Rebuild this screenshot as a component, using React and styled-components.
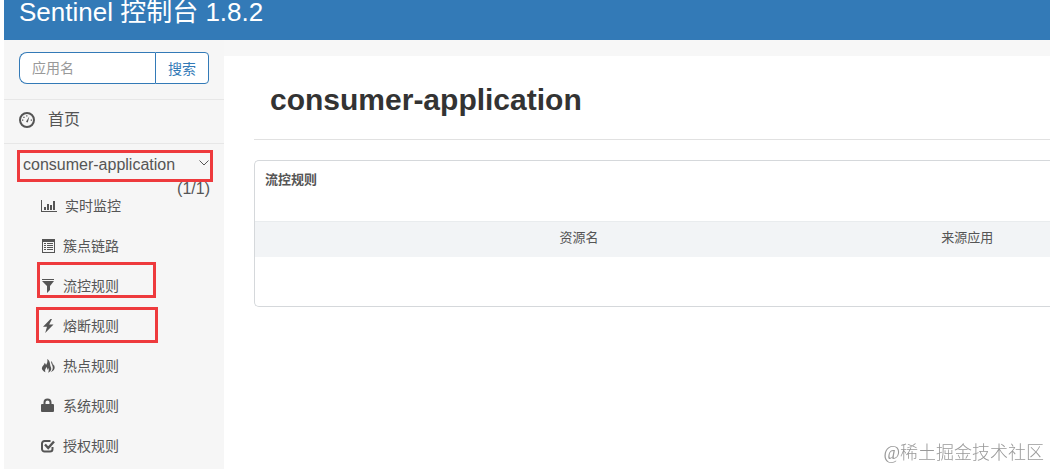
import React from "react";
import styled, { createGlobalStyle } from "styled-components";

const GlobalStyle = createGlobalStyle`
  * { box-sizing: border-box; }
  body {
    margin: 0;
    background: #fff;
    color: #555;
    font-family: "Liberation Sans", Arial, "Noto Sans CJK SC", sans-serif;
    font-size: 14px;
  }
`;

const Page = styled.div`
  min-height: 100vh;
  padding-left: 4px;
  display: flex;
  flex-direction: column;
`;

const Header = styled.header`
  height: 40px;
  padding-left: 15px;
  background: #337ab7;
`;

const Brand = styled.a`
  display: block;
  color: #fff;
  font-size: 26px;
  line-height: 24px;
  text-decoration: none;
  white-space: nowrap;
`;

const Body = styled.div`
  flex: 1;
  display: flex;
  background: #f7f7f7;
`;

const Sidebar = styled.nav`
  flex: none;
  width: 220px;
  background: #f6f6f6;
`;

const Search = styled.form`
  display: flex;
  height: 59px;
  padding: 12px 15px 15px;
`;

const SearchInput = styled.input`
  flex: 1;
  min-width: 0;
  padding: 0 12px;
  border: 1px solid #337ab7;
  border-right: 0;
  border-radius: 8px 0 0 8px;
  background: #fff;
  font: inherit;
  outline: 0;
  &::placeholder { color: #999; opacity: 1; }
`;

const SearchButton = styled.button`
  width: 54px;
  padding: 0;
  border: 1px solid #337ab7;
  border-radius: 0 4px 4px 0;
  background: #fff;
  color: #337ab7;
  font: inherit;
`;

const HomeLink = styled.a`
  display: flex;
  align-items: center;
  gap: 13px;
  height: 44px;
  padding: 0 15px 4px;
  border-top: 1px solid #e7e7e7;
  color: #555;
  font-size: 16px;
  line-height: 24px;
  text-decoration: none;
`;

const AppGroup = styled.section`
  border-top: 1px solid #e7e7e7;
`;

const AppLink = styled.a`
  position: relative;
  display: flex;
  flex-wrap: wrap;
  justify-content: space-between;
  padding: 9px 14px 0 19px;
  color: #555;
  font-size: 16px;
  line-height: 24px;
  text-decoration: none;
`;

const Count = styled.span`
  width: 100%;
  height: 10px;
  text-align: right;
`;

const Highlight = styled.span`
  position: absolute;
  top: ${(p) => p.$top}px;
  left: ${(p) => p.$left}px;
  width: ${(p) => p.$width}px;
  height: ${(p) => p.$height}px;
  border: 3px solid #ee3a3d;
`;

const Menu = styled.ul`
  margin: 0;
  padding: 0;
  list-style: none;
`;

const MenuItem = styled.li`
  position: relative;
`;

const MenuLink = styled.a`
  display: flex;
  align-items: center;
  gap: ${(p) => (p.$wide ? 8 : 6)}px;
  height: 40px;
  padding: 0 0 2px 37px;
  color: #555;
  line-height: 20px;
  text-decoration: none;
`;

const Icon = styled.svg`
  flex: none;
  width: 16px;
  height: 16px;
  fill: currentColor;
`;

const Chevron = styled.svg`
  width: 11px;
  height: 24px;
  fill: none;
  stroke: currentColor;
`;

const Main = styled.main`
  flex: 1;
  min-width: 0;
  margin-top: 16px;
  padding-left: 30px;
  background: #fff;
`;

const Title = styled.h1`
  height: 84px;
  margin: 0 0 20px;
  padding: 26px 16px 0;
  border-bottom: 1px solid #e1e1e1;
  color: #333;
  font-size: 30px;
  line-height: 36px;
`;

const Card = styled.section`
  height: 147px;
  overflow: hidden;
  border: 1px solid #d5d8db;
  border-right: 0;
  border-radius: 5px 0 0 5px;
`;

const CardTitle = styled.h2`
  height: 60px;
  margin: 0;
  padding: 10px;
  font-size: 13px;
  line-height: 18px;
`;

const Table = styled.table`
  width: 114%;
  table-layout: fixed;
  border-collapse: collapse;
`;

const Cell = styled.th`
  width: ${(p) => p.$width};
  height: 35px;
  padding: 0 0 5px;
  border-top: 1px solid #e9ecee;
  background: #f2f4f6;
  font-size: 13px;
  font-weight: 400;
`;

const Watermark = styled.div`
  position: fixed;
  right: 6px;
  bottom: 3px;
  color: #999;
  font-family: "Liberation Serif", "Noto Sans CJK SC", serif;
  font-size: 18px;
  font-weight: 300;
  line-height: 26px;
`;

const icons = {
  chart: <path d="M0 2h1v11h15v1H0zM3 9h2v3H3zM6 6h2v6H6zM9 7h2v5H9zM12 3h2v9h-2z" />,
  list: (
    <path fillRule="evenodd" d="M1 1h13v14H1zM2 4v10h11V4zM3 5h2v1H3zM6 5h6v1H6zM3 7h2v1H3zM6 7h6v1H6zM3 9h2v1H3zM6 9h6v1H6zM3 11h2v1H3zM6 11h6v1H6z" />
  ),
  filter: <path d="M1 1h12v1H1zM1 3h12L9 8v4l-3 3V8z" />,
  flash: <path d="M9.5 1L2 8.8h4L4.2 15 12.5 6.6H8.2L11 1z" />,
  fire: (
    <path d="M6.200 1c.7 3.200-.4 4.500-1.200 6C4.700 6 4.400 5.300 3.600 4.800 4 7-1.100 8.800 1.700 12.300c.7.9 1.700 1.600 2.800 2C3.300 11.800 5 10.600 5.500 9c1 1 .8 2 .6 2.900.8-.5 1-1.100 1.100-1.800.8 1.500.8 3-.2 4.600 3-1.300 4-3.600 2.600-6.300C8.700 6.500 9.600 3 6.200 1zM10 3c.2 2.100.4 2.700 1.100 4 1.400 2.900.5 5.500-1.700 7.300 4.500-1.600 5.100-4.800 3.300-7.800-.4 0-.4.6-.5 1.200C11.700 6 11.700 4.300 10 3z" />
  ),
  lock: <path fillRule="evenodd" d="M2.500 6V4.500a4 4 0 0 1 8 0V6H12a1 1 0 0 1 1 1v6a1 1 0 0 1-1 1H1a1 1 0 0 1-1-1V7a1 1 0 0 1 1-1zM4.500 6h4V4.500a2 2 0 0 0-4 0z" />,
  check: (
    <g fill="none" stroke="currentColor" strokeWidth="2">
      <path d="M9.5 3h-6A2.5 2.5 0 0 0 1 5.500V11A2.500 2.500 0 0 0 3.500 13.500H9A2.500 2.500 0 0 0 11.500 11V9" />
      <path d="M4 6.500l3.200 3.500L13 3.500" strokeWidth="2.400" />
    </g>
  ),
  dashboard: (
    <g>
      <circle cx="8" cy="8" r="7" fill="none" stroke="currentColor" strokeWidth="2" />
      <path d="M7.100 9.500L10.300 4.500 9 9.800a1 1 0 0 1-1.900-.3zM3 7.500h1.300v1.200H3zM4.300 4.700h1.300v1.200H4.300zM7.200 3.200h1.200v1.300H7.200zM11.700 7.500H13v1.200h-1.300z" />
    </g>
  ),
};

const menu = [
  { icon: "chart", label: "实时监控" },
  { icon: "list", label: "簇点链路" },
  { icon: "filter", label: "流控规则", mark: { $top: -5, $left: 33, $width: 119, $height: 36 } },
  { icon: "flash", label: "熔断规则", mark: { $top: 0, $left: 32, $width: 122, $height: 36 } },
  { icon: "fire", label: "热点规则" },
  { icon: "lock", label: "系统规则" },
  { icon: "check", label: "授权规则" },
];

function Glyph({ name }) {
  return <Icon viewBox="0 0 16 16" aria-hidden="true">{icons[name]}</Icon>;
}

export default function App() {
  return (
    <Page>
      <GlobalStyle />
      <Header>
        <Brand href="#">Sentinel 控制台 1.8.2</Brand>
      </Header>
      <Body>
        <Sidebar>
          <Search onSubmit={(e) => e.preventDefault()}>
            <SearchInput type="text" placeholder="应用名" aria-label="应用名" />
            <SearchButton type="submit">搜索</SearchButton>
          </Search>
          <HomeLink href="#">
            <Glyph name="dashboard" />
            首页
          </HomeLink>
          <AppGroup>
            <AppLink href="#">
              <span>consumer-application</span>
              <Chevron viewBox="0 0 11 24" aria-hidden="true">
                <path d="M.5 7.500L5 12l4.500-4.500" />
              </Chevron>
              <Count>(1/1)</Count>
              <Highlight $top={6} $left={13} $width={196} $height={32} />
            </AppLink>
            <Menu>
              {menu.map(({ icon, label, mark }) => (
                <MenuItem key={label}>
                  <MenuLink href="#" $wide={icon === "chart"}>
                    <Glyph name={icon} />
                    {label}
                  </MenuLink>
                  {mark && <Highlight {...mark} />}
                </MenuItem>
              ))}
            </Menu>
          </AppGroup>
        </Sidebar>
        <Main>
          <Title>consumer-application</Title>
          <Card>
            <CardTitle>流控规则</CardTitle>
            <Table>
              <thead>
                <tr>
                  <Cell as="td" $width="130px" />
                  <Cell scope="col">资源名</Cell>
                  <Cell scope="col">来源应用</Cell>
                </tr>
              </thead>
            </Table>
          </Card>
        </Main>
      </Body>
      <Watermark>@稀土掘金技术社区</Watermark>
    </Page>
  );
}
